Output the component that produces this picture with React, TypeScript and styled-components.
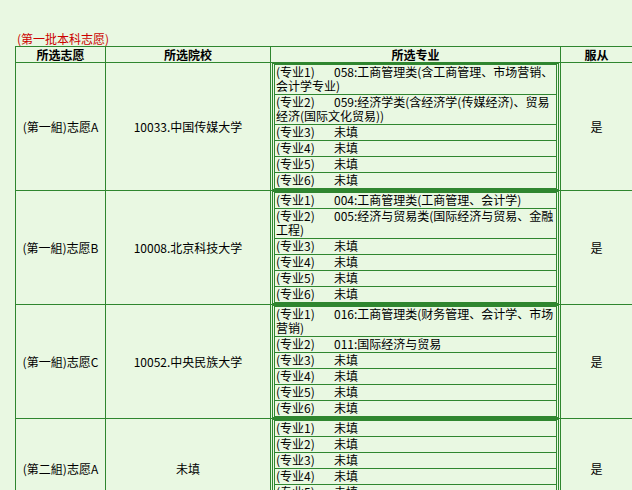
import React from "react";
import styled, { createGlobalStyle } from "styled-components";

const BG = "#e9f8e2";
const LINE = "#2f862f";

const GlobalStyle = createGlobalStyle`
  html, body {
    margin: 0;
    padding: 0;
    background: ${BG};
    overflow: hidden;
  }
  body {
    font-family: "Noto Sans CJK SC", "Noto Sans", sans-serif;
    font-size: 12px;
    color: #000;
  }
`;

const Page = styled.div`
  padding: 31px 0 0 15px;
`;

const Title = styled.div`
  color: #cc0000;
  line-height: 15px;
  padding-left: 2px;
`;

const Grid = styled.div`
  display: grid;
  grid-template-columns: 89px 164px 289px 71px;
  gap: 1px;
  padding: 1px;
  background: ${LINE};
  width: max-content;
`;

const HeadCell = styled.div`
  background: ${BG};
  font-weight: bold;
  text-align: center;
  line-height: 15px;
  height: 15px;
`;

const Cell = styled.div`
  background: ${BG};
  display: flex;
  align-items: center;
  justify-content: center;
  white-space: nowrap;
`;

const MajorCell = styled.div`
  background: ${BG};
  padding: 0 1px;
`;

const Frame = styled.div`
  border: 1px solid ${LINE};
  padding: 0 1px;
`;

const List = styled.div`
  border: 1px solid ${LINE};
`;

const Row = styled.div`
  line-height: 14px;
  padding: 0 0 1px 1px;
  white-space: nowrap;
  & + & {
    border-top: 1px solid ${LINE};
  }
`;

const Label = styled.span`
  display: inline-block;
  width: 58px;
`;

type Group = {
  name: string;
  school: string;
  majors: string[][];
  obey: string;
};

const U = ["未填"];

const groups: Group[] = [
  {
    name: "(第一組)志愿A",
    school: "10033.中国传媒大学",
    majors: [
      ["058:工商管理类(含工商管理、市场营销、", "会计学专业)"],
      ["059:经济学类(含经济学(传媒经济)、贸易", "经济(国际文化贸易))"],
      U,
      U,
      U,
      U,
    ],
    obey: "是",
  },
  {
    name: "(第一組)志愿B",
    school: "10008.北京科技大学",
    majors: [
      ["004:工商管理类(工商管理、会计学)"],
      ["005:经济与贸易类(国际经济与贸易、金融", "工程)"],
      U,
      U,
      U,
      U,
    ],
    obey: "是",
  },
  {
    name: "(第一組)志愿C",
    school: "10052.中央民族大学",
    majors: [
      ["016:工商管理类(财务管理、会计学、市场", "营销)"],
      ["011:国际经济与贸易"],
      U,
      U,
      U,
      U,
    ],
    obey: "是",
  },
  {
    name: "(第二組)志愿A",
    school: "未填",
    majors: [U, U, U, U, U, U],
    obey: "是",
  },
];

export default function App() {
  return (
    <>
      <GlobalStyle />
      <Page>
        <Title>(第一批本科志愿)</Title>
        <Grid>
          <HeadCell>所选志愿</HeadCell>
          <HeadCell>所选院校</HeadCell>
          <HeadCell>所选专业</HeadCell>
          <HeadCell>服从</HeadCell>
          {groups.map((g, gi) => (
            <React.Fragment key={gi}>
              <Cell>{g.name}</Cell>
              <Cell>{g.school}</Cell>
              <MajorCell>
                <Frame>
                  <List>
                    {g.majors.map((m, mi) => (
                      <Row key={mi}>
                        <Label>(专业{mi + 1})</Label>
                        {m[0]}
                        {m.length > 1 && (
                          <>
                            <br />
                            {m[1]}
                          </>
                        )}
                      </Row>
                    ))}
                  </List>
                </Frame>
              </MajorCell>
              <Cell>{g.obey}</Cell>
            </React.Fragment>
          ))}
        </Grid>
      </Page>
    </>
  );
}
